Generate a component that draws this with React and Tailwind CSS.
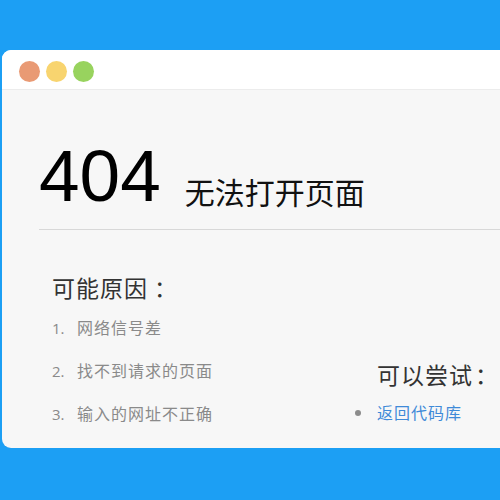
import React from 'react';

const reasons = ['网络信号差', '找不到请求的页面', '输入的网址不正确'];

const App = () => {
  return (
    <div
      className="w-[500px] h-[500px] bg-[#1c9ff4] pt-[50px] pl-[2px] overflow-hidden"
      style={{ fontFamily: '"Open Sans", "Noto Sans CJK SC", sans-serif' }}
    >
      <div className="w-[520px] h-[398px] bg-[#f7f7f7] rounded-l-[9px] overflow-hidden">
        {/* Title bar */}
        <div className="h-[40px] bg-white border-b border-[#ececec] flex items-center pt-[4px] pl-[17px] gap-[6px]">
          <span className="w-[21px] h-[21px] rounded-full bg-[#e99a74]" />
          <span className="w-[21px] h-[21px] rounded-full bg-[#f8d46f]" />
          <span className="w-[21px] h-[21px] rounded-full bg-[#98d35e]" />
        </div>

        {/* Heading */}
        <div className="ml-[37px] pt-[49px] pb-[17px] border-b border-[#d8d8d8] flex items-baseline">
          <span className="text-[73px] leading-none text-black" style={{ fontFamily: '"Liberation Sans", sans-serif' }}>404</span>
          <span className="ml-[24px] text-[30px] leading-none text-[#111] translate-y-[3px]">无法打开页面</span>
        </div>

        {/* Content */}
        <div className="flex pl-[50px] pt-[47px]">
          <div className="w-[325px]">
            <div className="text-[23px] leading-none text-[#333] tracking-[1px]">
              可能原因<span className="ml-[6px]">：</span>
            </div>
            <ol className="mt-[18px] flex flex-col gap-[23px]">
              {reasons.map((r, i) => (
                <li key={r} className="flex text-[16px] leading-[20px] text-[#8a8a8a]">
                  <span className="w-[25px] text-[15px]">{i + 1}.</span>
                  <span className="tracking-[1px]">{r}</span>
                </li>
              ))}
            </ol>
          </div>
          <div className="pt-[87px]">
            <div className="text-[23px] leading-none text-[#333] tracking-[1px] whitespace-nowrap">
              可以尝试<span className="ml-[2px]">：</span>
            </div>
            <ul className="mt-[16px]">
              <li className="flex items-center text-[16px] leading-[20px] -ml-[22px]">
                <span className="w-[6px] h-[6px] rounded-full bg-[#8c8c8c] mr-[16px]" />
                <span className="text-[#3f8ad8] tracking-[1px]">返回代码库</span>
              </li>
            </ul>
          </div>
        </div>
      </div>
    </div>
  );
};

export default App;
